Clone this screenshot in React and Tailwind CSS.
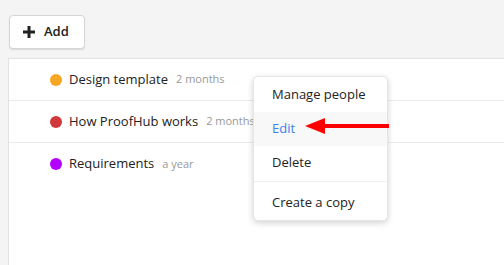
import React from 'react';

const items = [
    { name: 'Design template', age: '2 months', color: 'bg-[#f5a623]' },
    { name: 'How ProofHub works', age: '2 months', color: 'bg-[#d0393b]' },
    { name: 'Requirements', age: 'a year', color: 'bg-[#b300ff]' },
];

const Row = ({ name, age, color }) => (
    <div className="h-[42px] flex items-center pl-[41px] border-b border-[#ebebeb] last:border-b-0">
        <span className={`w-[12px] h-[12px] rounded-full ${color}`} />
        <span className="ml-[7px] text-[13px] text-[#222]">{name}</span>
        <span className="ml-[8px] text-[11px] text-[#999]">{age}</span>
    </div>
);

export default function App() {
    return (
        <div className="w-[504px] h-[265px] bg-[#f4f4f4] overflow-hidden relative font-['Open_Sans','Noto_Sans',sans-serif]">
            <div className="pt-[15px] pl-[9px]">
                <button className="w-[76px] h-[34px] bg-white border border-[#d6d6d6] rounded-[4px] shadow-[0_1px_1px_rgba(0,0,0,0.12)] flex items-center pl-[13px] gap-[9px] text-[13px] font-semibold text-[#222]">
                    <svg width="12" height="12" viewBox="0 0 12 12">
                        <rect x="4.5" y="0" width="3" height="12" fill="#222" />
                        <rect x="0" y="4.5" width="12" height="3" fill="#222" />
                    </svg>
                    Add
                </button>
            </div>

            <div className="ml-[8px] mt-[9px] h-[300px] bg-white border-l border-t border-[#e2e2e2]">
                {items.map(item => (
                    <Row key={item.name} {...item} />
                ))}
            </div>

            {/* context menu */}
            <div className="absolute left-[253px] top-[76px] w-[135px] pt-[1px] bg-white rounded-[5px] border border-[#e6e6e6] shadow-[0_2px_6px_rgba(0,0,0,0.18)] text-[13px] text-[#222]">
                <div className="h-[34px] flex items-center pl-[18px]">Manage people</div>
                <div className="h-[34px] flex items-center pl-[18px] bg-[#f8f8f8] text-[#3d82e8]">Edit</div>
                <div className="h-[34px] flex items-center pl-[18px]">Delete</div>
                <div className="mt-[1px] border-t border-[#eeeeee]" />
                <div className="h-[38px] flex items-center pl-[18px] pt-[4px]">Create a copy</div>
            </div>

            {/* red arrow */}
            <svg className="absolute left-[304px] top-[117px]" width="86" height="18" viewBox="0 0 86 18">
                <polygon points="1,9 21,1 21,17" fill="#f00" />
                <rect x="20" y="7" width="65" height="4" fill="#f00" />
            </svg>
        </div>
    );
}
